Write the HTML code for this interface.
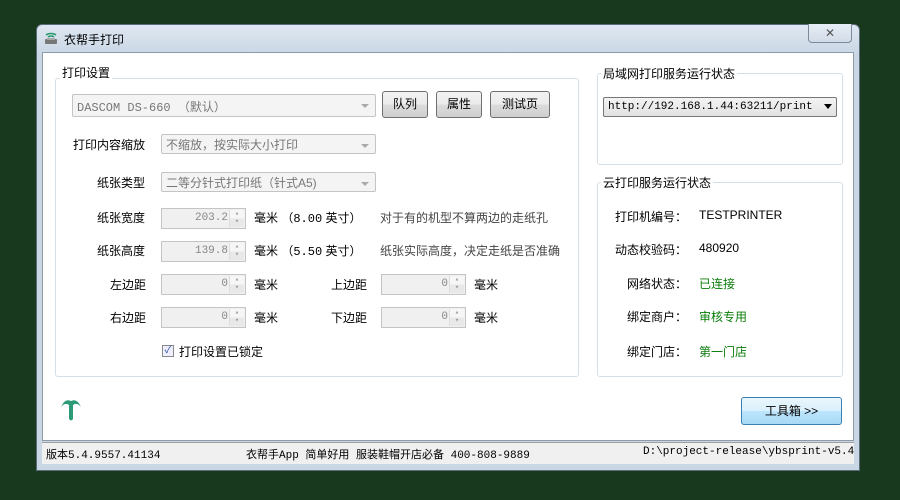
<!DOCTYPE html>
<html><head><meta charset="utf-8"><style>
*{margin:0;padding:0;box-sizing:border-box}
body{width:900px;height:500px;background:#18391e;position:relative;overflow:hidden;font-family:"Liberation Sans","Noto Sans CJK SC",sans-serif;font-size:12px;color:#000}
.a{position:absolute;white-space:nowrap}
.win{left:36px;top:24px;width:824px;height:447px;background:linear-gradient(#dfe8f2,#c9d6e4 30px,#c9d6e4);border:1px solid #5a6b7c;border-radius:6px 6px 0 0}
.client{left:42px;top:52px;width:812px;height:389px;background:#fff;border:1px solid #8e9aa8}
.gb{position:absolute;border:1px solid #d5dfe5;border-radius:3px}
.gl{position:absolute;background:#fff;padding:0 2px;font-size:12px}
.combo{position:absolute;border:1px solid #c4c4c4;background:#f4f4f4;color:#777;font-size:12px;padding:3px 4px;border-radius:2px}
.combo:after{content:"";position:absolute;right:6px;top:9px;border-left:4px solid transparent;border-right:4px solid transparent;border-top:4px solid #aaa}
.btn{position:absolute;border:1px solid #707070;border-radius:3px;background:linear-gradient(#f2f2f2,#ebebeb 50%,#dcdcdc 50%,#cfcfcf);text-align:center;font-size:12px;line-height:25px}
.spin{position:absolute;width:85px;height:21px;border:1px solid #c4c4c4;background:#f0f0f0;color:#888;text-align:right;padding-right:17px;line-height:19px;font-family:"Liberation Mono",monospace;font-size:11px}
.spin:after{content:"▴\A▾";white-space:pre;font-size:7px;line-height:8px;text-align:center;color:#999;position:absolute;right:1px;top:1px;width:14px;height:17px;border-left:1px solid #ddd;background:linear-gradient(#f6f6f6 50%,#e8e8e8 50%)}
.mono{font-family:"Liberation Mono","Noto Sans CJK SC",monospace}
.g{color:#0a7d0a}
</style></head><body>
<div class="a win"></div>
<svg class="a" style="left:43px;top:30px" width="16" height="16"><path d="M3 5a7 5 0 0 1 10 0M5 7a4 3 0 0 1 6 0" stroke="#2a9a70" stroke-width="1.5" fill="none"/><rect x="2" y="9" width="12" height="5" rx="1" fill="#777"/><rect x="4" y="8" width="8" height="2" fill="#aaa"/></svg>
<div class="a" style="left:64px;top:31px;font-size:12px">衣帮手打印</div>
<div class="a" style="left:808px;top:24px;width:44px;height:19px;border:1px solid #7c8a99;border-top:none;border-radius:0 0 4px 4px;background:linear-gradient(#e6edf5,#d2dce8);text-align:center;font-size:12px;color:#555;line-height:18px">✕</div>
<div class="a client"></div>

<div class="gb" style="left:55px;top:78px;width:524px;height:299px"></div>
<div class="gl" style="left:60px;top:64px">打印设置</div>
<div class="combo mono" style="left:72px;top:94px;width:304px;height:23px">DASCOM DS-660 （默认）</div>
<div class="btn" style="left:382px;top:91px;width:46px;height:27px">队列</div>
<div class="btn" style="left:436px;top:91px;width:46px;height:27px">属性</div>
<div class="btn" style="left:490px;top:91px;width:60px;height:27px">测试页</div>
<div class="a" style="left:73px;top:136px">打印内容缩放</div>
<div class="combo" style="left:161px;top:134px;width:215px;height:20px;padding-top:1px">不缩放，按实际大小打印</div>
<div class="a" style="left:97px;top:174px">纸张类型</div>
<div class="combo" style="left:161px;top:172px;width:215px;height:20px;padding-top:1px">二等分针式打印纸（针式A5)</div>
<div class="a" style="left:97px;top:209px">纸张宽度</div>
<div class="spin" style="left:161px;top:208px">203.2</div>
<div class="a" style="left:254px;top:209px">毫米 （<span class="mono">8.00</span> 英寸）</div>
<div class="a" style="left:380px;top:209px;color:#444">对于有的机型不算两边的走纸孔</div>
<div class="a" style="left:97px;top:242px">纸张高度</div>
<div class="spin" style="left:161px;top:241px">139.8</div>
<div class="a" style="left:254px;top:242px">毫米 （<span class="mono">5.50</span> 英寸）</div>
<div class="a" style="left:380px;top:242px;color:#444">纸张实际高度，决定走纸是否准确</div>
<div class="a" style="left:110px;top:276px">左边距</div>
<div class="spin" style="left:161px;top:274px">0</div>
<div class="a" style="left:254px;top:276px">毫米</div>
<div class="a" style="left:331px;top:276px">上边距</div>
<div class="spin" style="left:381px;top:274px">0</div>
<div class="a" style="left:474px;top:276px">毫米</div>
<div class="a" style="left:110px;top:309px">右边距</div>
<div class="spin" style="left:161px;top:307px">0</div>
<div class="a" style="left:254px;top:309px">毫米</div>
<div class="a" style="left:331px;top:309px">下边距</div>
<div class="spin" style="left:381px;top:307px">0</div>
<div class="a" style="left:474px;top:309px">毫米</div>
<div class="a" style="left:162px;top:345px;width:12px;height:12px;border:1px solid #8a8a8a;background:#eef;font-size:10px;line-height:10px;text-align:center;color:#2a4d9a">✓</div>
<div class="a" style="left:179px;top:343px">打印设置已锁定</div>

<div class="gb" style="left:597px;top:73px;width:246px;height:92px"></div>
<div class="gl" style="left:601px;top:65px">局域网打印服务运行状态</div>
<div class="a mono" style="left:603px;top:97px;width:234px;height:20px;border:1px solid #777;border-radius:2px;background:linear-gradient(#f4f4f4,#e2e2e2);font-size:11px;padding:3px 4px">http://192.168.1.44:63211/print</div>
<div class="a" style="left:824px;top:104px;border-left:4px solid transparent;border-right:4px solid transparent;border-top:5px solid #000"></div>

<div class="gb" style="left:597px;top:182px;width:246px;height:195px"></div>
<div class="gl" style="left:601px;top:174px">云打印服务运行状态</div>
<div class="a" style="left:615px;top:208px">打印机编号：</div><div class="a" style="left:699px;top:208px">TESTPRINTER</div>
<div class="a" style="left:615px;top:241px">动态校验码：</div><div class="a" style="left:699px;top:241px">480920</div>
<div class="a" style="left:627px;top:275px">网络状态：</div><div class="a g" style="left:699px;top:275px">已连接</div>
<div class="a" style="left:627px;top:308px">绑定商户：</div><div class="a g" style="left:699px;top:308px">审核专用</div>
<div class="a" style="left:627px;top:343px">绑定门店：</div><div class="a g" style="left:699px;top:343px">第一门店</div>

<svg class="a" style="left:60px;top:397px" width="22" height="26"><path d="M1 10Q5 1 11 4Q17 1 21 10Q17 5 13 8L13 22Q11 25 9 22L9 8Q5 5 1 10Z" fill="#2a9a78"/></svg>
<div class="btn" style="left:741px;top:397px;width:101px;height:28px;border-color:#3c7fb1;line-height:26px;background:linear-gradient(#eaf6fd,#d9f0fc 50%,#bee6fd 50%,#a7d9f5)">工具箱 &gt;&gt;</div>

<div class="a" style="left:42px;top:442px;width:812px;height:22px;background:#f0f0f0;border-top:1px solid #a0a0a0"></div>
<div class="a mono" style="left:46px;top:446px;font-size:11px">版本5.4.9557.41134</div>
<div class="a mono" style="left:246px;top:446px;font-size:11px">衣帮手App 简单好用 服装鞋帽开店必备 400-808-9889</div>
<div class="a mono" style="left:643px;top:446px;font-size:11px">D:\project-release\ybsprint-v5.4</div>
</body></html>
